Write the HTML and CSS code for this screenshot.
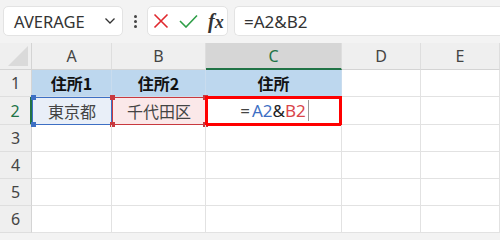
FILE: index.html
```html
<!DOCTYPE html>
<html lang="ja">
<head>
<meta charset="utf-8">
<link rel="stylesheet" href="styles.css">
</head>
<body>
<div class="toolbar">
  <div class="namebox">
    <span class="name">AVERAGE</span>
    <svg class="chev" width="12" height="8" viewBox="0 0 12 8"><path d="M1.5 1.5 L6 6 L10.5 1.5" fill="none" stroke="#333" stroke-width="1.3"/></svg>
  </div>
  <div class="dots"><span></span><span></span><span></span></div>
  <div class="fbtns">
    <svg width="16" height="16" viewBox="0 0 16 16"><path d="M1.5 1.5 L14.5 14.5 M14.5 1.5 L1.5 14.5" stroke="#E0282E" stroke-width="1.6" fill="none"/></svg>
    <svg width="19" height="14" viewBox="0 0 19 14"><path d="M1 7 L7 13 L18 1.5" stroke="#2E9E47" stroke-width="1.6" fill="none"/></svg>
    <span class="fx"><i>f</i><i>x</i></span>
  </div>
  <div class="finput">=A2&amp;B2</div>
</div>
<div class="sheet">
  <div class="corner"><span class="tri"></span></div>
  <div class="ch">A</div>
  <div class="ch">B</div>
  <div class="ch sel">C</div>
  <div class="ch">D</div>
  <div class="ch">E</div>

  <div class="rh">1</div>
  <div class="c hd">住所1</div>
  <div class="c hd">住所2</div>
  <div class="c hd">住所</div>
  <div class="c"></div>
  <div class="c"></div>

  <div class="rh rsel">2</div>
  <div class="c refa">東京都<i class="k tl"></i><i class="k bl"></i></div>
  <div class="c refb">千代田区<i class="k tl"></i><i class="k bl"></i><i class="k tr"></i><i class="k br"></i></div>
  <div class="c edit"><span class="eq">=</span><span class="ra">A2</span><span class="amp">&amp;</span><span class="rb">B2</span><span class="caret"></span></div>
  <div class="c"></div>
  <div class="c"></div>

  <div class="rh">3</div><div class="c"></div><div class="c"></div><div class="c"></div><div class="c"></div><div class="c"></div>
  <div class="rh">4</div><div class="c"></div><div class="c"></div><div class="c"></div><div class="c"></div><div class="c"></div>
  <div class="rh">5</div><div class="c"></div><div class="c"></div><div class="c"></div><div class="c"></div><div class="c"></div>
  <div class="rh">6</div><div class="c"></div><div class="c"></div><div class="c"></div><div class="c"></div><div class="c"></div>
</div>
</body>
</html>
```
FILE: styles.css
```css
* { box-sizing: border-box; }
html, body { margin: 0; padding: 0; }
body {
  width: 500px;
  height: 233px;
  overflow: hidden;
  background: #F3F3F3;
  font-family: "Noto Sans", "Noto Sans CJK JP", sans-serif;
  color: #333;
}
.toolbar {
  display: flex;
  align-items: stretch;
  height: 43px;
  padding: 6px 0 7px 3px;
}
.namebox {
  width: 120px;
  background: #fff;
  border: 1px solid #E3E3E3;
  border-radius: 5px;
  display: flex;
  align-items: center;
  justify-content: space-between;
  padding: 0 6px 0 10px;
}
.name { font-size: 16.5px; color: #333; }
.dots {
  width: 24px;
  display: flex;
  flex-direction: column;
  align-items: center;
  justify-content: center;
  gap: 2px;
}
.dots span { width: 3px; height: 3px; background: #444; border-radius: 50%; }
.fbtns {
  width: 81px;
  background: #fff;
  border: 1px solid #E3E3E3;
  border-radius: 5px;
  display: flex;
  align-items: center;
  padding: 0 0 0 5px;
  gap: 10px;
}
.fx {
  font-family: "Liberation Serif", serif;
  font-size: 20px;
  font-weight: bold;
  color: #333;
  margin-left: 0;
}
.fx i:last-child { font-size: 18px; }
.finput {
  flex: 1;
  margin-left: 6px;
  background: #fff;
  border: 1px solid #E3E3E3;
  border-right: none;
  border-radius: 5px 0 0 5px;
  font-size: 17px;
  color: #333;
  display: flex;
  align-items: center;
  padding-left: 9px;
}
.sheet {
  display: grid;
  grid-template-columns: 32px 80px 94px 136px 79px 79px;
  grid-template-rows: 27px 27px 28px 27px 27px 27px 27px;
  background: #fff;
}
.corner {
  background: #EFEFEF;
  border-right: 1px solid #D4D4D4;
  border-bottom: 1px solid #D4D4D4;
  position: relative;
}
.tri {
  position: absolute;
  right: 3px;
  bottom: 3px;
  width: 0; height: 0;
  border-left: 20px solid transparent;
  border-bottom: 20px solid #DADADA;
}
.ch {
  background: #EFEFEF;
  border-right: 1px solid #DEDEDE;
  border-bottom: 1px solid #D4D4D4;
  display: flex;
  align-items: center;
  justify-content: center;
  font-size: 16px;
  color: #444;
}
.ch.sel {
  background: #D6D6D6;
  color: #217346;
  border-bottom: 2px solid #217346;
}
.rh {
  background: #EFEFEF;
  border-right: 1px solid #D4D4D4;
  border-bottom: 1px solid #DEDEDE;
  display: flex;
  align-items: center;
  justify-content: center;
  font-size: 16px;
  color: #444;
}
.rh.rsel { color: #217346; border-right: 2px solid #217346; }
.c {
  border-right: 1px solid #E2E2E2;
  border-bottom: 1px solid #E2E2E2;
  display: flex;
  align-items: center;
  justify-content: center;
  font-family: "Noto Sans CJK JP", sans-serif;
  font-size: 16px;
  color: #333;
  position: relative;
}
.c.hd {
  background: #BDD7EE;
  font-weight: bold;
  color: #111;
  border-right-color: #C9DCEE;
  border-bottom-color: #D0DDEA;
}
.refa {
  background: #E9EFF8;
  border: 1.5px solid #3D6FC4;
  color: #444;
}
.refb {
  background: #FBE8E9;
  border: 1.5px solid #C8393F;
  color: #444;
}
.k {
  position: absolute;
  width: 5px;
  height: 5px;
}
.refa .k { background: #3D6FC4; }
.refb .k { background: #C8393F; }
.k.tl { left: -3px; top: -3px; }
.k.bl { left: -3px; bottom: -3px; }
.k.tr { right: -3px; top: -3px; }
.k.br { right: -3px; bottom: -3px; }
.refa .k.tl, .refa .k.bl { left: -2px; }
.edit {
  font-family: "Noto Sans", sans-serif;
  font-size: 17px;
  padding-left: 2px;
}
.edit::after {
  content: "";
  position: absolute;
  left: -1px; top: -1px; right: -1px; bottom: -2px;
  border: 3px solid #FF0000;
}
.eq { color: #444; margin-right: 2px; }
.amp { color: #222; }
.ra { color: #3D6FC4; }
.rb { color: #D9454B; }
.caret {
  display: inline-block;
  width: 1px;
  height: 21px;
  background: #999;
  margin-left: 2px;
}
```
